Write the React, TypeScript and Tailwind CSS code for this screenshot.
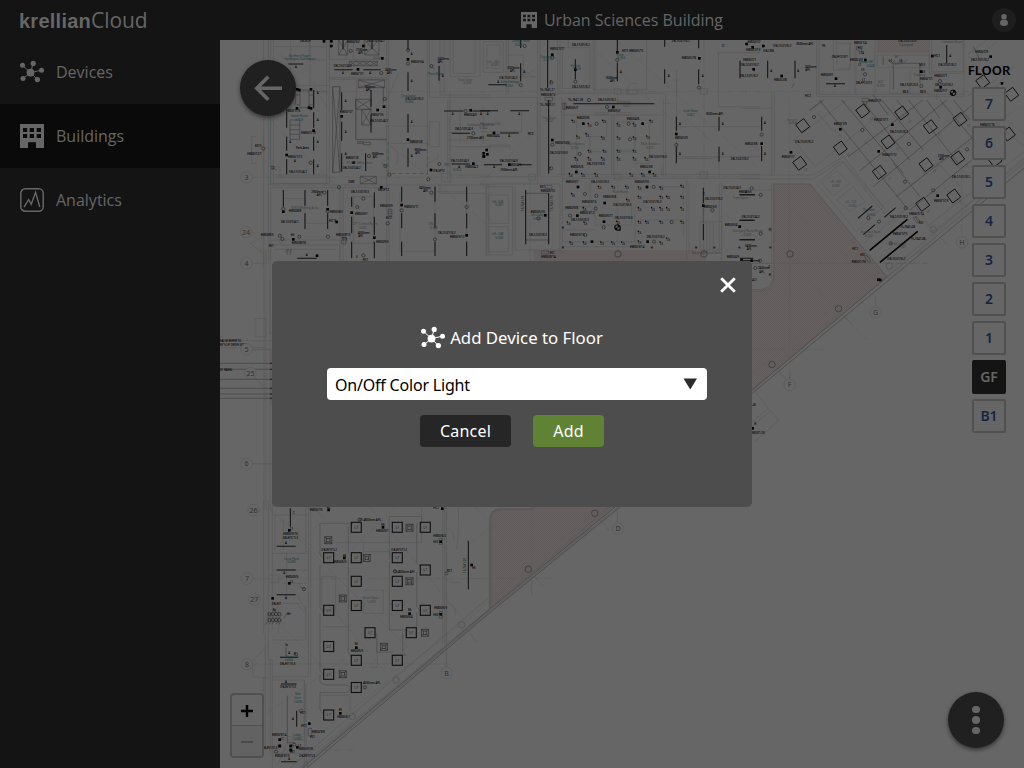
import React from "react";

type Zone = {
  x: number;
  y: number;
  walls?: string;
  dash?: string;
  lines?: string;
  bars?: string;
  squares?: string;
  rings?: string;
  labels?: string;
  rooms?: string;
  notes?: string;
};

const zones: Zone[] = [
  {
    x: 220,
    y: 40,
    walls:
      "M131 0V675M145 0V675M152 0V435M160 0V430M160 20H320M160 137H325M160 155H325M160 405H325M165 412H330M175 430H330M320 0V430M328 0V430M328 58H500M328 113H500M335 118H500M500 0V435M506 0V400M622 0V405M628 0V175M500 258H622M500 310H622M628 172H810M660 0V165M672 0V160M660 165H810M690 0V110H780V0M700 0V100H765V0M628 245H658V320H628ZM683 178V420M690 178V405H810M683 300H810M690 320H810M665 400H692V425H665ZM145 435H810M152 443H500M152 443V660M500 435V675M507 435V675M360 435V675M370 443V675M800 435V650M807 435V650M165 380H145M110 290H95V370H110M130 285V320M152 580L90 610L130 640M150 615H360V675M165 628H350M660 430V460H800M195 475H255V550H323M400 470H460V610H400ZM540 455V634H645V440M652 455H740V640M152 600H360M378 0V56M328 0V56M400 60V0M410 120V300H500M280 137L320 200M510 320Q545 330 530 375M622 370Q660 360 655 340M212 0V137M267 0V60M267 60H320M270 0V137M180 412V380H160M535 100L500 180M720 200V310M790 200V310",
    dash: "M95 412H810M95 578H150L320 740M150 20L810 560M152 155H810M690 155V435M160 250L420 510",
    lines:
      "M338 140H360V397H338ZM338 140L360 397M360 140L338 397M210 240H239V298H210ZM210 255H239M210 269H239M210 283H239M240 150H267V203H240ZM226 165H240M226 195H240M226 165V195M267 165H281V195H267M388 64H472V77H388ZM388 64L409 77L430 64L451 77L472 64M388 77L409 64L430 77L451 64L472 77M415 120H494V143H415ZM415 120L494 143M494 120L415 143M407 178H453V208H407ZM407 178L453 208M453 178L407 208M425 208H453V255H425ZM425 208L453 255M453 208L425 255M421 409H469V431H421ZM421 409L469 431M469 409L421 431M407 178V298H500M413 305H430V310H413ZM430 307H452V314H430ZM490 140V190M195 635L205 628L200 645M207 635L214 628L210 645M155 383L170 390M630 78L645 88M485 370L500 380M356 0V45H383V0M434 0V45H477V0M356 0L383 45M383 0L356 45M434 0L477 45M477 0L434 45M504 508H516V526H504ZM504 514H516M504 520H516M362 592H380V602H362M365 602V612H378V602",
    bars: "M205 72H250M200 145V200M200 215V263M200 290V332M200 358V403M281 150V205M281 217V263M281 290V332M281 358V403M365 157V210M365 245V303M365 340V395M437 340V393M453 150V200M453 225V278M343 89H398M430 89H482M369 0V28M456 0V28M564 0V30M564 97V153M564 222V278M564 325V380M657 78V122M672 213H730M757 213H810M695 280H750M695 372H750M190 450V500M255 450V497M323 450V497M323 520V567M255 520V567M395 470V500M395 530V580M395 605V655M463 457V503M463 530V585M463 605V655M545 440V485M545 520V565M545 605V648M645 440V485M645 520V565M645 605V648M740 440V485M740 520V565M740 605V648M232 655H290",
    squares: "312,4 334,4 334,18 414,88 430,18 365,229 473,210 401,368 281,272 200,345 564,58 564,299 752,211 791,349 791,340 760,371 545,495 395,518 463,593 740,586 220,598 291,647 190,515 323,508 350,546 633,390 484,442 487,55 231,148 273,148 231,205 273,205 267,203 238,150 492,200",
    rings: "564,71 564,30 392,33 484,99 494,177 737,213 760,280 658,372 272,368 238,590 324,590 179,587 187,597 545,511 740,501 645,598 430,476 430,646 190,507 323,514 412,501 447,348 130,326 157,383 496,378 357,442 503,550 508,404 634,78 313,458 625,418 634,458",
    labels:
      "240,7,DB-NCR;381,9,EM00/9/2;440,6,DB-1/L01/4L2;408,34,2700mm;415,43,APL;341,80,DB-1/L01/4L2;393,106,EM00/1/1;494,93,2400mm;501,101,APL;198,217,EM00/1/16;244,283,EM00/1/13;228,328,Park Area;204,355,EM00/1/12;207,398,DB-1/L01/4L2;360,218,EM00/1/7;453,227,EM00/1/5;450,245,DB-1/L01/4L2;435,144,600mm;438,154,APL;377,356,EM00/1/8;368,386,DB-1/L01/4L2;456,345,3000mm;458,355,APL;573,69,EM00/5/4;556,180,DB-1/L01/3L2;570,308,EM00/5/6;583,332,3600mm;586,341,APL;652,61,2400mm;653,70,APL;732,227,EM00/4/3;705,269,DB-1/L01/4L3;740,296,2700mm APL;693,365,DB-1/L01/4L3;736,384,EM00/4/2;105,320,EXC5;82,344,EM00/12/1;274,458,2900mm;290,467,APL;206,517,EM00/8/6;330,518,EM00/8/3;182,548,DB-1/L01/4L1;327,545,FIC15;122,587,EM00/8/3;146,622,EX1;348,588,EM00/8/10;215,613,EM00/8/16;393,458,DB-1/L01/3L3;405,526,EM00/6/1;413,582,4000mm;415,592,APL;468,608,EM00/6/5;480,501,EM00/5/9;498,537,EXT1;473,454,DB-SP12;553,504,EM00/5/11;597,446,3450mm;610,456,APL;653,583,DB-1/L01/3L2;690,595,EM00/5/12;640,396,DB-SPT2;385,430,OMS;428,664,FIC1;212,589,EG;365,601,X13;290,161,A;290,242,A;290,310,A;374,280,A;374,345,A;572,45,A;572,125,A;572,248,A;572,350,A;665,110,A;366,101,A;448,101,A;225,85,A;222,365,A;695,224,A;780,224,A;715,383,A;257,648,A;408,655,S;290,382,A;208,310,A;374,185,A",
    rooms: "206,50,Northern Power;194,61,Switchgear Sub Station;212,232,Switch Room;226,242,G.020;544,170,Circulation;556,190,G.066;624,106,Plant Room;672,377,DFT;700,392,G.014",
    notes: "213,506,SLR26 Meeting Area;714,122,Team Zone;730,131,G.018;742,257,Computer Wardrobe;778,267,G.044;380,373,FC & W Office Store;400,556,CFT Control Room;417,566,G.025;625,556,Office;630,566,G.028;459,58,G.044",
  },
  {
    x: 480,
    y: 40,
    walls:
      "M0 173H172V410H0M78 0V165M85 0V165M173 0V430M180 0V410M233 0V165M240 0V155M233 160H550M0 432H240V640M247 415V640M245 172V410M252 180V410M395 225V408M402 225V408M550 180V410M557 160V410M245 225H550M348 218H385V225H348ZM410 218H450V225H410ZM245 415H840M230 403H840M620 420V675M627 430V640M725 430V675M718 430V640M18 440H98V645H18ZM25 465H85V550H25ZM25 560H85V635H25ZM10 5H70V97H10ZM20 15H60V85H20ZM105 440V630H240M340 0V150H500V0M345 0V155M715 38H840M715 38V200H840M660 545H725V630H660ZM670 545V630M680 545V630M690 545V630M700 545V630M660 415H682V395H660ZM660 163H682V146H660ZM403 163H423V146H403ZM147 420H166V403H147ZM403 420H423V403H403ZM590 90V160M580 120H590V350H717V410M590 260H840M590 355H700L720 350H840M0 320H90V330M30 325V315H90M130 60V45H82M130 60V110H170M90 128L165 90M100 70L165 115M440 150H472V163H440ZM440 160Q440 125 472 130M247 23H330V145H247ZM265 0V23M0 275H125V210M260 500H330V430M345 495V555H455V500M465 500V620H247M535 440H610V500M480 540H610V590M247 570H350M247 605H465M545 380V408M290 240V395M330 290V330M380 240V290H330M330 335H385M413 245H465V330H415M465 335H415M508 240V370H465",
    dash: "M0 155H840M180 410H840M410 0L840 390M350 35L620 280M0 430L230 210M150 420V675M413 160V640M672 0V640M560 180L700 310M550 190H580M730 520L840 600",
    bars: "M25 134H80M122 0V24M122 70V124M203 0V143M206 180V401M286 58V118M412 0V40M412 68V123M554 0V20M554 88V131M656 0V25M656 88V133M280 191H523M0 212H54M91 212H147M60 279H116M12 374H66M115 374H155M589 230V272M717 230V273M589 320V370M717 320V365M780 62V115M137 450V613M206 460V613M670 443V490M670 552V600M778 464H825M778 541H825M778 599H825M780 655H820",
    lines: "M248 190H258V208H248ZM253 190V208M195 172H218V182H195ZM203 182V193H213V182M196 436H216V445H196ZM184 633H206V642H184ZM137 460H206M137 600H206M670 500V550",
    squares:
      "217,44 412,37 658,55 821,88 818,22 217,300 400,201 286,89 42,279 12,350 22,343 20,330 88,374 589,282 310,251 488,251 289,396 509,396 294,441 501,441 374,489 292,527 372,545 336,605 503,605 670,497 779,560 785,660 196,526 408,560 418,568",
    rings:
      "134,18 122,135 217,53 286,125 412,60 214,128 657,143 589,315 217,314 381,201 327,180 214,385 350,251 446,251 450,298 299,342 315,462 521,441 270,527 371,562 522,605 575,546 349,467 347,506 413,563 697,511 815,445 175,535 316,585",
    labels:
      "210,30,EM00/1/11;276,19,DB-1/L01/3L2;426,37,EXT1 EM00/5/15;605,58,EM00/5/18;575,6,DB-1/L01/3L2;82,86,3000mm;90,95,APL;58,116,DB-1/L01/4L2;52,129,A;276,145,DB-1/L01/3L2;378,117,3000mm;390,126,APL;180,152,15-7641-17;183,168,EM00/8/10;180,198,15-7641-17;264,182,15-7641-18;354,182,DB-1/L01/3L2;257,207,EM00/5/1;383,215,EM00/5/2;678,224,3000mm APL;585,296,EM00/5/9;752,359,DB-1/L01/3L2;795,314,EM00/3/6;143,285,FIC3;20,292,EM00/4/4;225,312,EM00/5/20;209,341,DB-1/L01/3L3;290,237,EM00/3/6;440,240,EM00/4/6;320,376,DB-1/L01/3L3;506,355,DB-1/L01/3L3;59,365,DB-1/L01/4L3;85,379,EM00/4/3;61,394,2500mm APL;272,384,EM00/5/6;480,384,EM00/3/6;257,430,EM00/3/7;333,430,DB-1/L01/3L3;464,430,EM00/3/10;180,443,EX1;182,457,EM00/6/10;370,473,EM00/3/8;306,488,EM00/3/10;400,499,DB-1/L01/3L3;490,489,DB-1/L01/3L3;256,506,EM00/3/8;300,522,EM00/3/12;356,530,EM00/3/11;404,537,DB-1/L01/3L3;273,542,DB-1/L01/3L3;152,518,EM00/5/10;147,587,DB-1/L01/3L3;270,587,EM00/5/13;500,593,DB-1/L01/3L2;450,625,EM00/3/14;672,505,EM00/5/3;674,480,DB-1/L01/3L2;730,447,DB-1/L01/4L1;777,459,EM00/5/5;734,558,EM00/5/4;740,653,EM00/4/5;795,620,3400mm;800,629,APL;782,77,DB-1/L01/3L2;790,62,EM00/2/1;798,33,EM00/2/13;803,8,EM00/7/2;184,655,EM00/8/1A;209,643,EXT;780,110,DB-1/L01/3L2;670,465,C;210,130,C;208,390,C;130,100,A;420,100,A;563,110,A;665,110,A;597,255,A;725,255,A;597,345,A;725,345,A;20,224,A;115,224,A;85,290,A;40,385,A;725,22,LT;268,410,LS;305,410,LS;345,410,LS;450,410,LS;485,410,LS;520,410,LS;276,250,LS;368,250,LS;325,260,LS;412,260,LS;460,260,LS;510,250,LS;290,297,LS;318,290,LS;365,300,LS;412,300,LS;460,300,LS;500,297,LS;285,362,LS;325,362,LS;365,362,LS;325,340,LS;370,340,LS;412,340,LS;460,340,LS;495,362,LS;460,362,LS;412,362,LS;355,448,LS;396,448,LS;437,448,LS;475,450,LS;540,450,LS;603,445,LS;475,478,LS;540,478,LS;560,478,LS;603,478,LS;475,512,LS;515,512,LS;540,512,LS;560,512,LS;603,512,LS;440,487,LS;275,470,LS;310,512,LS;262,555,LS;312,555,LS;410,553,LS;475,553,LS;497,553,LS;540,553,LS;603,553,LS;475,583,LS;560,603,LS;270,615,LS;310,615,LS;362,615,LS;395,615,LS;425,615,LS;475,612,LS;540,615,LS;245,567,H;245,628,H;512,628,H;645,628,H;700,628,H;775,628,H",
    rooms: "96,7,Change Store;104,17,G.046;180,53,Circulation;190,63,G.011;272,80,Kitchen;280,90,G.026;410,48,Plant;412,58,G.055;610,217,Cycle Store;620,227,G.057;62,130,Initial Storage;76,140,G.047;36,488,Lift - 045;46,498,G.037;36,586,Lift - 046;46,596,G.038;152,529,Lift Lobby;160,539,G.035",
    notes: "22,68,Lift - 343;32,78,G.045;186,238,Circulation;198,247,G.042;258,316,Male Showers;272,327,G.054;483,316,Male Showers;498,327,G.055;0,255,Workshop (150);410,190,Circulation;428,200,G.052;398,458,Plant Room;757,577,Changing Plants Room;790,587,G.049;635,642,Recycling/Waste Store;758,476,Team Space",
  },
  {
    x: 740,
    y: 40,
    walls:
      "M230 0V170H672M237 0V163H672M345 0V165M405 0V165M412 45H568V83H412ZM568 0V100H670M575 0V95H670V0M672 0V172M450 90V160H570M510 90V165M280 0V90H330V10M295 10H330V85H295M290 0V75M95 155V405M103 155V400M0 205H95M0 405H220L310 350L460 540M0 417H220L305 362L445 535M230 432L310 365L430 500L350 575ZM245 430L290 392L330 430L280 468ZM290 480L340 440L375 485L330 515ZM208 212L252 180M160 300L320 180M225 380L410 230M160 300L225 380M230 215L280 275L315 250M370 300L395 325M570 405L600 375L660 440M95 430V720Q90 748 65 748H0M101 434V720Q97 754 65 754H0M0 670H95M15 450H95M682 44L740 0M700 60L770 5M690 80L760 150L820 80M590 180V160M550 400L620 350L700 420M370 610L520 490M520 490L590 590L440 710M560 560L852 335M565 585L852 362M600 590L622 615M852 320L770 250M610 440L680 500M680 170L770 120",
    dash: "M0 155H700M148 170V780M350 0V170M665 330V590M230 220L440 420M100 460L430 740M180 420L410 690M680 150L852 280M420 500L840 200M0 670H560",
    lines:
      "M210 210L250 180M238 180L505 510M305 180L490 400M365 180L510 360M425 180L550 330M505 180L655 370M600 180L735 340M325 350L548 180M360 392L620 180M400 440L715 180M470 470L700 290M510 510L695 360M470 180L500 215M560 180L600 235M640 180L690 240M400 165L445 225M460 370L540 470M700 20L720 60M350 20L365 25V35L350 30ZM365 175H385V185H365M370 185V193H380V185M430 50V75M540 72V130M460 70V150M455 70H540M445 60L455 70L465 60M480 60L490 70L500 60M163 130L155 143M520 533L530 530L540 543L530 548ZM374 649L380 645L392 664L386 668ZM527 529L533 545",
    bars: "M83 62V115M165 62V115M65 230V272M65 318V364M258 131H315M620 15V70M0 464H45M0 541H40M0 599H45M0 662H60M354 535L397 498M370 584L405 554M433 532L467 503M389 631L502 538M420 667L533 574",
    squares: "125,108 20,12 70,18 376,60 288,116 544,95 602,142 301,268 416,334 457,254 153,337 65,311 593,467 786,130 752,50 577,48 636,155 642,162 415,719 421,720 35,662",
    rings: "222,231 367,270 507,312 495,425 681,328 580,451 375,103 544,138 600,123 65,284 62,465 62,581 60,662 452,610 385,534 417,545 497,504 640,159 46,684",
    labels:
      "100,22,DB-1/L01/3L2;168,16,2600mm APL;194,84,2400mm;196,94,APL;102,122,EM00/2/8;70,37,DB-CMS;242,109,EM00/3/1;275,54,DB-FF12/3/1;342,12,EM00/1/4;353,27,EXT;358,42,LT4;330,62,EM00/2/3;348,132,DB-FF12/2/1;475,6,DB-1/L01/2L3;583,50,FIC1;595,79,DB-1/L01/3L2;538,78,ML3;538,98,ML3;540,119,EM00/1/1;480,137,DB-1/L01/2L3;540,158,ML3;488,158,ML3;583,110,EM00/2/1;583,156,EM00/1/7;585,138,DB-1/L01/3L2;706,40,EM00/1/6;693,62,DB-1/L01/3L2;386,186,EM00/1/1;402,244,EM00/1/11;450,280,DB-1/L01/3L2;282,256,EM00/1/9;427,349,EM00/1/12;166,310,DB-1/L01/3L2;125,355,EM00/1/7;593,352,2700mm;598,361,APL;636,415,DB-1/L01/3L2;582,486,EM00/1/13;450,534,DB-1/L01/3L2;508,524,EM00/1/14;480,564,15-7641-08;459,586,EM00/1/15;512,600,15-7641-08;442,659,DB-1/L01/3L2;337,629,FIC1;361,649,EXT;335,668,EM00/1/16;536,553,EXT;721,258,EM00/1/16;5,535,DB-1/L01/4L2;54,688,2400mm;58,698,APL;36,724,4L2;91,95,A;172,95,A;72,252,A;72,345,A;282,142,A;628,52,A;16,460,A;355,78,L1;364,92,L5;366,122,L1;245,20,TR;195,170,FIC2;446,66,L3;478,66,L3;86,572,FC;88,627,H;86,708,H;85,684,Z",
    rooms: "357,68,Female WC;380,82,G.048;370,514,Dry Riser;382,527,G.003;478,17,Courtyard",
    notes: "141,242,Servery;146,252,G.054;270,430,Lift - 332;276,440,G.005;315,490,Lift - 141;326,500,G.004;414,130,ACV;410,141,G.076;362,580,Furniture Store;375,590,G.002;464,53,WC 1;463,74,G.071;521,108,Cleaning;605,10,Common Room;450,614,Wind Lobby;475,625,G.001;190,276,LT;193,394,LT;320,349,LT;390,240,LT;505,250,LT;560,518,LT;580,400,LT;655,490,LT;682,260,LT;595,288,LT;675,380,LT;445,420,LT;468,330,LT",
  },
  {
    x: 220,
    y: 500,
    walls:
      "M131 0V400M145 0V395M157 0V390M145 395V480H157V804M136 400V750M150 480V760M265 0V530H157M272 0V530M257 0V155H265M157 45H265M157 160H265M157 210H265M157 420H257V315M157 540H253V710H205M253 540V804M258 550V740M668 0V430M674 0V430M679 0V500M150 225H175V247H150M145 433L95 485L100 530L145 535M230 310L257 340M230 280L257 330M145 340L130 390M190 310H240M190 250H260M605 20V127H320M680 85Q705 90 702 122M680 310Q710 315 705 345M665 225L690 247H720M175 400V310M170 800L205 720H260M130 530V750M165 45V150M190 60V150M200 155V300M280 0V20L310 55M713 0Q720 80 710 150M170 760H260V800M306 586H390V633M430 128V155H510V200M347 230H306V330H347ZM430 290V340H490V270H430M306 380H385M448 502H472V415",
    dash: "M95 236H800M95 492H690M150 30L560 440M100 298L330 520M450 20L740 370M300 70L180 190M330 320L500 520M145 20L300 160M260 770L750 390M275 720L780 330M680 0V520M30 750H400M550 0L300 240M140 640L370 480",
    lines:
      "M202 587V728H225M145 345L155 340M155 345L145 357M165 345L155 357M175 345L165 357M185 345L175 357M145 362L138 373M155 360L148 373M165 362L155 373M175 360L168 373M185 360L176 373M192 355L198 342L215 340M240 260L256 267M210 735H218V755H210ZM265 685H275V708H265ZM238 628H247V636H238ZM658 115H667V133H658ZM658 335H667V355H658ZM675 217H684V224H675ZM198 440V470",
    bars: "M211 25V80M170 139H227M170 210H227M170 284H227M180 472H235M183 552H230M230 632V680M183 785H230M745 122V268",
    squares: "208,91 208,250 158,295 326,30 489,82 373,174 569,341 409,443 361,640 179,719 179,738 232,742 667,26 755,195 268,671 212,738 212,750 662,125 662,343",
    rings: "148,342 158,342 168,342 178,342 148,360 158,360 168,360 178,360 252,267 179,738 223,734 168,755 435,562 418,59 525,214 228,463",
    labels:
      "190,105,EM00/9/10;188,118,DB-EV1/1L3;197,234,EM00/9/5;155,315,DB-EV1;190,222,A;195,132,A;195,296,A;194,437,7a;158,334,8g;202,346,8c;205,463,A;222,466,R;180,494,DB-EV1/1L3;195,548,A;181,564,DB-EV1/1L3;216,660,A;240,641,FIC1;243,682,FIC1;276,698,EM00/9/9;270,715,EX1;156,708,EM00/9/14;182,721,L1;126,746,DB-EV1/1L3;165,770,EM00/9/13;210,760,EX1;235,741,L1;236,751,EM00/9/16;238,770,DB-EV1/1L3;205,781,A;269,34,EM00/7/3;320,27,FIC;418,62,(1) 4600mm APL;468,97,EM00/6/1;304,152,DB-EV1/1L2;341,190,EM00/6/3;514,152,DB-EV1/1L2;520,218,(1) 4600mm APL;540,355,EM00/6/4;392,457,EM00/6/5;429,551,4600mm APL;352,653,EM00/6/7;640,110,EM00/6/2;640,128,EX2;643,328,EM00/6/3;640,348,EX3;640,28,FIC1;680,215,FIC1;210,90,L1;210,248,L1;484,78,E6;369,170,E6;564,333,E6;404,435,E6;356,633,E6;757,206,E6;219,42,C",
    rooms: "193,179,Local Plant;202,190,Ce006;197,474,Store;194,484,Ce004;225,585,Stair;223,596,Core;222,608,Ce005;219,708,Lobby;220,719,Ce002",
    notes: "430,297,Event Space;442,308,Ce003",
  },
  {
    x: 470,
    y: 500,
    walls: "M58 328V65Q58 28 90 28H160L195 22M62 315V65Q64 32 92 32M185 230V285M193 228L218 258M390 60L418 92M442 22V70M0 400L18 425M0 375L360 85",
    dash: "M0 235H245M0 130L130 30M0 350L360 50M15 20L190 220M185 22V235",
  },
  {
    x: 740,
    y: 250,
    walls: "M45 425L85 475L117 510L45 575M85 475L37 515M90 483L37 528M115 360L140 390M312 195L340 228M407 140V170M149 365V390M530 12L545 5M37 410L45 420M440 80L450 90",
    dash: "M37 298H255M0 175L140 60M37 370L420 60M50 330L130 380M180 60L380 270M37 40H565M149 0V390",
    labels: "36,467,-05;36,551,M00/1/20;43,526,R",
    squares: "38,535",
  },
  {
    x: 220,
    y: 250,
    walls: "M105 205H137V260H105ZM132 0V780M138 0V780M150 0V780M0 272H160M0 293H140M98 40H135M95 298H155M105 382L132 412M95 641H160M150 90V250H160",
    dash: "M130 0V80M95 300H160M95 641H150",
    lines: "M0 340H160M0 358H160M0 388H160M0 415H160M0 432H160M0 445H160",
    bars: "M151 340H156M151 358H156M151 388H156M151 415H156M151 432H156M151 445H156",
    labels: "0,275,FALSE REFER TO;0,287,EV'S UP DRIVE SIZES;0,363,01 PANEL",
  },
];

const luminaires =
  "356.3,527.3 397.3,527.3 425.3,527.3 328.7,557.7 356.3,557.7 397.3,557.7 425.3,570 356.3,581.3 397.3,581.3 328.7,610.3 356.3,605.5 397.3,605.5 425.3,610.3 370,632.7 411.3,632.7 328.7,646.5 356.3,660.3 397.3,660.3 328.7,674.3 356.3,687.5 328.7,715";
const vents =
  "328.3,540.3 409.5,527.7 366.7,558 342.7,598.5 409.5,581.3 425,632.7 384,646.7 342.7,674.3";
const diamonds =
  "862.7,111 901.7,113 930.3,126.7 960,119.3 1011.7,94.3 802.7,125.7 840.3,148 888,142 926,164.7 957.7,158 1008.3,134 799.7,163.3 879.3,172.3 922.7,204.3 953.7,196 982.7,81.7 995,160";
const circuits =
  "M320 523.3H353L348.300 527V553M320 523.3V555L323 558M348.300 558V652L351 657M320 565V608L323 612M320 613V670L323 674M320 675V682L325 685H347L351.700 688L347 692.500H320V710L323 714M389.300 516.500H421.700V523M389.300 516.500V555L393 558M389.300 562V603L393 606M389.300 603V630H406L409 632M416.700 523V563L421 567M416.700 572V607L421 611M416.700 613V630M402.700 633V652L406 655H393L397 658M376.700 633V652H393";
const gridMarks: [number, number, string][] = [
  [246.5, 177.3, "3"],
  [246, 232.2, "24"],
  [246.5, 263.3, "4"],
  [246.5, 349.3, "5"],
  [250.5, 373, "25"],
  [246.5, 463.8, "6"],
  [253.5, 510, "26"],
  [247, 578.5, "7"],
  [254.3, 599.5, "27"],
  [247, 664.2, "8"],
  [446.5, 673, "B"],
  [618, 528.8, "D"],
  [789.7, 384.7, "F"],
  [875.7, 312.5, "G"],
  [962, 242.3, "H"],
];
const uprightTags: [number, number, string][] = [
  [465.5, 573, "15-7641-07"],
  [523.5, 211, "15-7641-19"],
  [553, 211, "15-7641-19"],
];
const columns =
  "594.7,513.3 528.3,569.3 838.5,308.7 772,364.5 790,254 618,254 704,254 461.7,624.7 396,680 352.3,716.5 889.3,266 933.3,229.5";

const points = (s?: string) =>
  s ? s.split(" ").map((p) => p.split(",").map(Number)) : [];
const words = (s?: string) =>
  s
    ? s.split(";").map((p) => {
        const [x, y, ...rest] = p.split(",");
        return { x: +x, y: +y, t: rest.join(",") };
      })
    : [];

function ZoneLayer({ z }: { z: Zone }) {
  return (
    <g transform={`translate(${z.x} ${z.y}) scale(0.33333)`} fill="none">
      <path d={z.walls} stroke="#555555" strokeWidth="1.5" />
      <path d={z.dash} stroke="#585858" strokeWidth="1.3" strokeDasharray="22 6 5 6" />
      <path d={z.lines} stroke="#363636" strokeWidth="1.6" />
      <path d={z.bars} stroke="#141414" strokeWidth="3.200" />
      {points(z.squares).map(([x, y], i) => (
        <rect key={i} x={x - 4} y={y - 4} width="8" height="8" fill="#050505" />
      ))}
      {points(z.rings).map(([x, y], i) => (
        <circle key={i} cx={x} cy={y} r="4.800" stroke="#1c1c1c" strokeWidth="1.700" />
      ))}
      <g fontFamily="'Noto Sans', sans-serif" fontSize="8.500">
        {words(z.notes).map((w, i) => (
          <text key={i} x={w.x} y={w.y} fill="#3d3d3d">{w.t}</text>
        ))}
        {words(z.rooms).map((w, i) => (
          <text key={i} x={w.x} y={w.y} fill="#12383a">{w.t}</text>
        ))}
        {words(z.labels).map((w, i) => (
          <React.Fragment key={i}>
            {w.t === "LS" && <circle cx={w.x} cy={w.y - 9} r="2.400" fill="#080808" />}
            <text x={w.x} y={w.y} fill="#080808" stroke="#080808" strokeWidth=".2">{w.t}</text>
          </React.Fragment>
        ))}
      </g>
    </g>
  );
}

function FloorPlan() {
  return (
    <svg className="block h-full w-full" viewBox="220 40 804 728" aria-hidden="true">
      <defs>
        <pattern id="hatch" width="2" height="2" patternUnits="userSpaceOnUse">
          <rect width="2" height="2" fill="#666161" />
          <path d="M0 0L2 2M-1 1L1 3M1 -1L3 1" stroke="#5c5050" strokeWidth=".4" />
        </pattern>
      </defs>
      <path d="M773 184H810L887 277L614 508L490 608V520Q490 509 500 509H530L534 507V250H706V289H760Q773 287 773 275ZM877 40H929V53H877ZM270 350H276V405H270Z" fill="url(#hatch)" />
      <g fill="none">
        <path d="M306.7 768L490 612.5L620 507L755 391L1024 168M302 768L489.5 609.5L615 507L752 390L887 277" stroke="#484848" strokeWidth=".8" />
        <path d="M303 768L490 611L618 507L754 388L1024 163M299 768L470 625L752 386M290 768L488 598M888 272L1024 158" stroke="#555555" strokeWidth=".6" />
        <path d="M773 184H810L887 277M490 608V520Q490 509 500 509H534" stroke="#505050" strokeWidth=".7" />
        <path d={circuits} stroke="#4b4b4b" strokeWidth=".6" />
      </g>
      {zones.map((z, i) => (
        <ZoneLayer key={i} z={z} />
      ))}
      <path d="M869.700 250.300L907.300 219.300M880 262.300L917.700 231.300" stroke="#060606" strokeWidth="1.500" />
      <path d="M388 142V173.5H427.5V142" fill="none" stroke="#2c6a2c" strokeWidth=".9" strokeDasharray="4 3" />
      <path d="M270.5 70V183.5H328" fill="none" stroke="#4b5d5d" strokeWidth=".8" />
      <circle cx="617.500" cy="227.500" r="2.800" fill="#666666" stroke="#080808" />
      <path d="M617.500 224.700V227.500H620.300A2.800 2.800 0 0 0 617.500 224.700ZM617.500 230.300V227.500H614.700A2.800 2.800 0 0 0 617.500 230.300Z" fill="#080808" />
      <circle cx="953" cy="92.800" r="2.800" fill="#666666" stroke="#080808" />
      <path d="M953 90V92.800H955.800A2.800 2.800 0 0 0 953 90ZM953 95.600V92.800H950.200A2.800 2.800 0 0 0 953 95.600Z" fill="#080808" />
      {uprightTags.map(([x, y, t]) => (
        <text key={x} x={x} y={y} transform={`rotate(-90 ${x} ${y})`} fontSize="2.900" fill="#101010" fontFamily="'Noto Sans', sans-serif">{t}</text>
      ))}
      {points(columns).map(([x, y], i) => (
        <circle key={i} cx={x} cy={y} r="3.200" fill="none" stroke={i < 7 ? "#383838" : "#525252"} strokeWidth=".8" />
      ))}
      {points(diamonds).map(([x, y], i) => (
        <path key={i} d={`M${x - 7} ${y - 1}L${x + 1} ${y - 7}L${x + 7} ${y + 1}L${x - 1} ${y + 7}Z`} fill="none" stroke="#121212" strokeWidth="1" />
      ))}
      {points(luminaires).map(([x, y], i) => (
        <g key={i}>
          <rect x={x - 5} y={y - 5} width="10" height="10" fill="none" stroke="#101010" strokeWidth="1.100" />
          <text x={x} y={y + 1.2} textAnchor="middle" fontSize="3.300" fill="#202020" fontFamily="'Liberation Sans', sans-serif">L7</text>
        </g>
      ))}
      {points(vents).map(([x, y], i) => (
        <g key={i} fill="none" stroke="#262626" strokeWidth=".65">
          <rect x={x - 3.5} y={y - 3.5} width="7" height="7" />
          <rect x={x - 1.7} y={y - 1.7} width="3.400" height="3.400" />
          <path d={`M${x - 3.5} ${y - 3.5}l2 2M${x + 3.5} ${y - 3.5}l-2 2M${x - 3.5} ${y + 3.5}l2 -2M${x + 3.5} ${y + 3.5}l-2 -2`} />
        </g>
      ))}
      {gridMarks.map(([x, y, t]) => (
        <g key={t}>
          <circle cx={x} cy={y} r="5.800" fill="#666666" stroke="#595959" strokeWidth=".6" />
          <text x={x} y={y + 2.6} textAnchor="middle" fontSize="7.200" fill="#303030" fontFamily="'Noto Sans', sans-serif">{t}</text>
        </g>
      ))}
    </svg>
  );
}

function DevicesIcon({ className }: { className?: string }) {
  return (
    <svg className={className} viewBox="0 0 24 24" fill="currentColor" stroke="currentColor">
      <path d="M10.5 12.7L2.5 5.3M10.5 12.7L13.2 3.3M10.5 12.7L21.7 10.1M10.5 12.7L3 18.6M10.5 12.7L17.4 19.6" strokeWidth="1" />
      <g stroke="none">
        <circle cx="10.5" cy="12.6" r="3.9" />
        <circle cx="2.5" cy="5.3" r="2.5" />
        <circle cx="13.2" cy="3.4" r="2.6" />
        <circle cx="21.5" cy="10.2" r="2.5" />
        <circle cx="3" cy="18.6" r="2.5" />
        <circle cx="17.4" cy="19.6" r="2.6" />
      </g>
    </svg>
  );
}

function BuildingIcon({ className }: { className?: string }) {
  return (
    <svg className={className} viewBox="0 0 24 24" fill="currentColor">
      <path fillRule="evenodd" d="M0 0H24V24H16V18.300H8V24H0ZM3 4V8H7.200V4ZM9.700 4V8H14V4ZM16.700 4V8H21V4ZM3 10V14H7.200V10ZM9.700 10V14H14V10ZM16.700 10V14H21V10Z" />
    </svg>
  );
}

function AnalyticsIcon({ className }: { className?: string }) {
  return (
    <svg className={className} viewBox="0 0 24 24" fill="none" stroke="currentColor">
      <rect x=".8" y=".8" width="22.400" height="22.400" rx="4.500" strokeWidth="1.500" />
      <path d="M4 19L8.700 11.700L11.200 16.300L15.600 4.300L19.800 19" strokeWidth="1.400" />
    </svg>
  );
}

const floors = ["7", "6", "5", "4", "3", "2", "1", "GF", "B1"];

export default function App() {
  return (
    <div className="relative flex h-[768px] w-[1024px] flex-col overflow-hidden bg-[#141414] font-['Open_Sans','Noto_Sans',sans-serif] text-[#666666]">
      <header className="grid h-10 shrink-0 grid-cols-[220px_40px_1fr_40px] items-center">
        <div className="flex items-baseline pl-[19px] leading-none">
          <span className="font-['Liberation_Sans',sans-serif] text-[20px] font-bold tracking-[0.25px]">krellian</span>
          <span className="text-[21px] tracking-[-0.1px]">Cloud</span>
        </div>
        <div className="col-start-3 flex items-center justify-center gap-[7px]">
          <BuildingIcon className="h-4 w-4" />
          <span className="text-[16px] leading-6">Urban Sciences Building</span>
        </div>
        <div className="flex justify-end pr-2">
          <div className="flex h-6 w-6 items-center justify-center rounded-full bg-[#1e1e1e]">
            <svg className="h-3 w-2" viewBox="0 0 8 12" fill="currentColor">
              <circle cx="4" cy="2.800" r="2.800" />
              <path d="M0 9Q0 6.200 2.200 5.600Q4 6.600 5.800 5.600Q8 6.200 8 9Q8 12 4 12Q0 12 0 9Z" />
            </svg>
          </div>
        </div>
      </header>

      <div className="flex min-h-0 flex-1">
        <nav className="flex w-[220px] shrink-0 flex-col text-[16px]">
          <a className="flex h-16 items-center gap-3 pl-5"><DevicesIcon className="h-6 w-6" />Devices</a>
          <a className="flex h-16 items-center gap-3 bg-[#0a0a0a] pl-5"><BuildingIcon className="h-6 w-6" />Buildings</a>
          <a className="flex h-16 items-center gap-3 pl-5"><AnalyticsIcon className="h-6 w-6" />Analytics</a>
        </nav>

        <main className="relative flex-1 bg-[#666666]">
          <FloorPlan />
          <button className="absolute left-5 top-5 flex h-14 w-14 items-center justify-center rounded-full bg-[#202020] shadow-[0_2px_4px_rgba(0,0,0,0.5)]" aria-label="Back">
            <svg className="h-7 w-7" viewBox="0 0 28 28" fill="none" stroke="#666666" strokeWidth="3.600">
              <path d="M28 14.200H2.500M14.300 2.700L2.800 14.200L14.300 25.700" />
            </svg>
          </button>

          <div className="absolute right-[18px] top-[22px] flex flex-col items-center gap-[5px]">
            <div className="-mx-2 h-5 font-['Noto_Sans',sans-serif] text-[13px] font-semibold leading-[17px] text-black">FLOOR</div>
            {floors.map((f) => (
              <button
                key={f}
                className={
                  f === "GF"
                    ? "flex h-[34px] w-[34px] items-start justify-center rounded-[2px] bg-[#141414] pt-[7px] font-['Noto_Sans',sans-serif] text-[14px] font-semibold leading-5 text-[#666666]"
                    : "flex h-[34px] w-[34px] items-start justify-center rounded-[2px] border-2 border-[#505050] bg-[#666666] pt-[5px] font-['Noto_Sans',sans-serif] text-[14px] font-semibold leading-5 text-[#142542]"
                }
              >
                {f}
              </button>
            ))}
          </div>

          <div className="absolute bottom-2.5 left-2.5 flex h-[65px] w-[34px] flex-col rounded border-2 border-[#505050] bg-[#666666]">
            <button className="flex h-[31px] items-center justify-center border-b border-[#505050] pt-px" aria-label="Zoom in">
              <svg className="h-3 w-3" viewBox="0 0 12 12"><path d="M6 0V12M0 6H12" stroke="#000" strokeWidth="2.400" /></svg>
            </button>
            <button className="flex flex-1 items-center justify-center bg-[#626262] pt-0.5" aria-label="Zoom out">
              <svg className="h-3 w-3" viewBox="0 0 12 12"><path d="M0 6H12" stroke="#4a4a4a" strokeWidth="2" /></svg>
            </button>
          </div>

          <button className="absolute bottom-5 right-5 flex h-14 w-14 flex-col items-center justify-center gap-[3px] rounded-full bg-[#202020] shadow-[0_2px_4px_rgba(0,0,0,0.5)]" aria-label="More">
            <span className="h-[7.500px] w-[7.500px] rounded-full bg-[#666666]" />
            <span className="h-[7.500px] w-[7.500px] rounded-full bg-[#666666]" />
            <span className="h-[7.500px] w-[7.500px] rounded-full bg-[#666666]" />
          </button>
        </main>
      </div>

      <div className="absolute inset-0 flex items-center justify-center">
        <section role="dialog" className="flex h-[246px] w-[480px] flex-col rounded-[5px] bg-[#4d4d4d] text-white">
          <div className="flex justify-end pr-4 pt-4">
            <svg className="h-4 w-4" viewBox="0 0 16 16" fill="none" stroke="currentColor" strokeWidth="2.800"><path d="M1.200 1.200L14.800 14.800M14.800 1.200L1.200 14.800" /></svg>
          </div>
          <h2 className="mt-[33px] flex h-6 items-center justify-center gap-[5px] font-['Noto_Sans',sans-serif] text-[16.800px] leading-6">
            <DevicesIcon className="h-6 w-6" />
            <span>Add Device to Floor</span>
          </h2>
          <div className="ml-[55px] mt-[18px] flex h-8 w-[380px] shrink-0 items-center justify-between rounded-[4px] bg-white pl-2 pr-[9px] text-black">
            <span className="pt-0.5 font-['Noto_Sans',sans-serif] text-[16px] tracking-[-0.2px]">On/Off Color Light</span>
            <svg className="h-3 w-[15px]" viewBox="0 0 15 12"><path d="M.5 .5H14L7.250 11.500Z" fill="#2b2b2b" /></svg>
          </div>
          <div className="ml-[148px] mt-[15px] flex gap-[22px] font-['Noto_Sans',sans-serif] text-[16px] tracking-[0.2px]">
            <button className="h-8 w-[91px] rounded-[4px] bg-[#262626]">Cancel</button>
            <button className="h-8 w-[71px] rounded-[4px] bg-[#5f8234]">Add</button>
          </div>
        </section>
      </div>
    </div>
  );
}
